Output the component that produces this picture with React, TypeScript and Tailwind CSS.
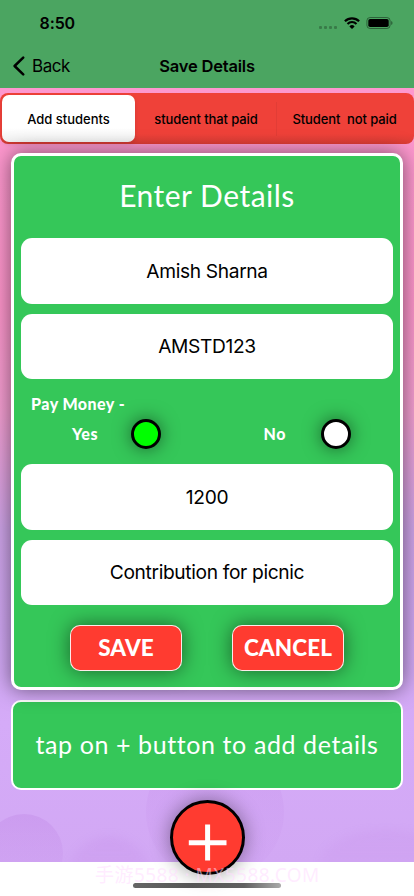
import React from "react";

const sf = "font-['Inter','Liberation_Sans',sans-serif]";
const avenir = "font-['Lato','Liberation_Sans',sans-serif]";

function StatusBar() {
  return (
    <div className="flex h-[44px] items-center pt-[2px] pl-[39.5px] pr-[21px]">
      <span className="text-[16px] font-semibold leading-[20px] tracking-[-0.1px]">8:50</span>
      <div className="ml-auto flex items-center">
        <div className="mr-[7px] mt-[8px] flex gap-[2px]">
          {[0, 1, 2, 3].map((i) => (
            <span key={i} className="size-[3px] rounded-[1px] bg-black/25" />
          ))}
        </div>
        <svg className="mr-[6px]" width="16" height="12" viewBox="0 0 16 12" fill="none" stroke="#000">
          <path d="M0.9 4.2A10.1 10.1 0 0 1 15.1 4.2" strokeWidth="2.2" />
          <path d="M3.5 6.9A6.4 6.4 0 0 1 12.5 6.9" strokeWidth="2.1" />
          <path d="M8 12L5.4 9.4A3.7 3.7 0 0 1 10.6 9.4Z" fill="#000" stroke="none" />
        </svg>
        <svg width="27" height="12" viewBox="0 0 27 12">
          <rect x="0.9" y="0.5" width="23.2" height="11" rx="3.2" fill="none" stroke="#000" strokeOpacity="0.4" />
          <rect x="2.3" y="2" width="20.4" height="8" rx="1.8" />
          <path d="M25.2 4.1Q26.5 4.6 26.5 6T25.2 7.9Z" fillOpacity="0.45" />
        </svg>
      </div>
    </div>
  );
}

function NavBar() {
  return (
    <div className="grid h-[44px] grid-cols-3 items-center">
      <div className="flex items-center pl-[13px]">
        <svg width="12" height="20" viewBox="0 0 12 20" fill="none" stroke="#000" strokeWidth="2.5" strokeLinecap="round" strokeLinejoin="round">
          <path d="M10.2 1.6L1.6 10L10.2 18.4" />
        </svg>
        <span className="ml-[7px] text-[17px] leading-[22px] tracking-[-0.45px]">Back</span>
      </div>
      <h1 className="whitespace-nowrap pt-px text-center text-[16.5px] font-semibold tracking-[-0.2px]">Save Details</h1>
    </div>
  );
}

function Tabs() {
  return (
    <div className="mt-[5px] flex h-[51px] rounded-[8px] bg-[linear-gradient(#ef4139_80%,#dc3d36)] p-[2px] text-[13px] font-medium">
      <div className="flex w-[133px] items-center justify-center rounded-[7px] bg-[linear-gradient(#fff_70%,#f0f0f0)] pt-[2px] shadow-[0_2px_5px_rgba(0,0,0,0.12)]">
        Add students
      </div>
      <div className="flex flex-1 items-center justify-center whitespace-nowrap pl-px pt-[2px] tracking-[-0.1px]">student that paid</div>
      <div className="h-[34px] w-px self-center bg-black/5" />
      <div className="flex w-[135px] items-center justify-center whitespace-pre pt-[2px] tracking-[-0.1px]">Student  not paid</div>
    </div>
  );
}

function Field({ value }: { value: string }) {
  return (
    <div className="flex h-[65.5px] items-center justify-center rounded-[11px] bg-white pt-px text-[19.2px] tracking-[-0.35px] text-black">
      {value}
    </div>
  );
}

function Radio({ on }: { on?: boolean }) {
  return (
    <span
      className={
        "size-[30px] rounded-full border-[3px] border-black shadow-[0_0_18px_rgba(0,0,0,0.5)] " +
        (on ? "bg-[#00ff00]" : "bg-white")
      }
    />
  );
}

function ActionButton({ label }: { label: string }) {
  return (
    <button className={`${avenir} flex h-[46px] w-[112px] items-center justify-center rounded-[10px] border border-white/90 bg-[#ff3b30] text-[22.5px] font-black tracking-[0.1px] text-white shadow-[0_0_20px_rgba(0,0,0,0.5)]`}>
      {label}
    </button>
  );
}

function DetailsCard() {
  return (
    <section className="relative mx-[11px] mt-[9px] h-[537px] rounded-[10px] border-[3px] border-white bg-[#35c759] px-[7px] shadow-[0_0_20px_rgba(0,0,0,0.5)]">
      <h2 className={`${avenir} flex h-[82px] items-center justify-center pb-[4px] text-[30px] tracking-[0.5px] text-white`}>
        Enter Details
      </h2>
      <div className="flex flex-col gap-[10px]">
        <Field value="Amish Sharna" />
        <Field value="AMSTD123" />
      </div>
      <div className={`${avenir} h-[85px] pt-[14px] text-[16px] font-black text-white`}>
        <div className="pl-[10px] leading-[22px] tracking-[0.45px]">Pay Money -</div>
        <div className="mt-[4px] flex h-[30px] items-center">
          <span className="w-[109.5px] pl-[51px] tracking-[0.6px]">Yes</span>
          <Radio on />
          <span className="w-[160px] pl-[103px] tracking-[0.6px]">No</span>
          <Radio />
        </div>
      </div>
      <div className="flex flex-col gap-[10px]">
        <Field value="1200" />
        <Field value="Contribution for picnic" />
      </div>
      <div className="mt-[20px] flex justify-center gap-[50px]">
        <ActionButton label="SAVE" />
        <ActionButton label="CANCEL" />
      </div>
    </section>
  );
}

export default function App() {
  return (
    <div className={`${sf} relative h-[896px] w-full overflow-hidden bg-white text-black`}>
      <header className="h-[88px] bg-[#4ba561]">
        <StatusBar />
        <NavBar />
      </header>
      <main className="relative h-[774px] bg-[linear-gradient(#fd98cf_0%,#fa93c8_28%,#f09ccf_42%,#cca2e6_57%,#cda4ef_70%,#d5abf8_82%,#d2a8f4_100%)]">
        <svg className="absolute bottom-0 left-0" width="414" height="110" viewBox="0 0 414 110">
          <defs>
            <linearGradient id="bubble" x1="0" y1="0" x2="0" y2="1">
              <stop offset="0" stopColor="#b97ce0" stopOpacity="0.28" />
              <stop offset="1" stopColor="#c48ae8" stopOpacity="0.08" />
            </linearGradient>
            <filter id="soft">
              <feGaussianBlur stdDeviation="4" />
            </filter>
          </defs>
          <circle cx="24" cy="101" r="39" fill="url(#bubble)" />
          <circle cx="215" cy="60" r="69" fill="url(#bubble)" opacity="0.7" />
          <circle cx="109" cy="126" r="42" fill="url(#bubble)" opacity="0.6" filter="url(#soft)" />
          <ellipse cx="386" cy="112" rx="66" ry="34" fill="url(#bubble)" opacity="0.5" filter="url(#soft)" />
        </svg>
        <div className="relative flow-root">
          <Tabs />
          <DetailsCard />
          <section className={`${avenir} mx-[11px] mt-[10px] flex h-[90px] items-center justify-center whitespace-nowrap rounded-[10px] border-2 border-white bg-[#35c759] pb-px text-[25px] tracking-[0.6px] text-white`}>
            tap on + button to add details
          </section>
        </div>
      </main>
      <button aria-label="Add details" className="absolute left-[169.5px] top-[800px] size-[75px] rounded-full border-[3px] border-black bg-[#ff3b30] shadow-[0_0_20px_rgba(0,0,0,0.4)]">
        <svg className="absolute inset-0" width="69" height="69" viewBox="0 0 69 69" stroke="#fff" strokeWidth="5">
          <path d="M15.8 39.7H53.5M34.6 21.5V57.5" />
        </svg>
      </button>
      <div className="absolute left-[95px] top-[863.5px] whitespace-nowrap font-['Noto_Sans','Noto_Sans_CJK_SC',sans-serif] text-[19px] leading-[22px] tracking-[0.45px] text-[#ffdcff]/55">
        手游5588 · MX5588.COM
      </div>
      <div className="absolute left-[133px] top-[882.5px] h-[5px] w-[148px] rounded-full bg-[linear-gradient(90deg,#666_0%,#555_40%,#606060_75%,#aaa_100%)]" />
    </div>
  );
}
